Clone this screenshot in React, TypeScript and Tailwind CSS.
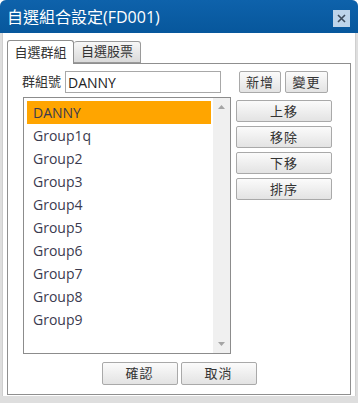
import React from 'react';

const groups = ['DANNY', 'Group1q', 'Group2', 'Group3', 'Group4', 'Group5', 'Group6', 'Group7', 'Group8', 'Group9'];

const font = { fontFamily: '"Open Sans", "Noto Sans CJK TC", sans-serif' };

const Btn: React.FC<{ label: string; className?: string }> = ({ label, className }) => (
  <button
    className={`h-[22px] flex items-center justify-center rounded-[2px] border border-[#a9a9a9] bg-gradient-to-b from-[#fbfbfb] to-[#e3e3e3] text-[13px] text-[#333] leading-none tracking-[1px] ${className ?? ''}`}
  >
    {label}
  </button>
);

const App: React.FC = () => {
  return (
    <div style={font} className="w-[358px] h-[403px] flex flex-col bg-[#dedede] rounded-t-[6px] overflow-hidden">
      {/* Title bar */}
      <div className="h-[33px] shrink-0 flex items-center justify-between pl-[7px] pr-[8px] bg-gradient-to-b from-[#0e62ab] to-[#07579c]">
        <span className="text-white text-[16px] leading-none">自選組合設定(FD001)</span>
        <button className="w-[17px] h-[17px] mt-[3px] flex items-center justify-center bg-[#bdd4ea]">
          <svg width="9" height="9" viewBox="0 0 9 9">
            <path d="M1 1L8 8M8 1L1 8" stroke="#3c4b5c" strokeWidth="1.6" />
          </svg>
        </button>
      </div>

      {/* Body */}
      <div className="flex-1 mx-[2px] mb-[7px] bg-white border-x border-[#cfcfcf] pl-[4px] pr-[4px] pt-[7px] pb-[1px] flex flex-col">
        {/* Tabs */}
        <div className="flex items-end h-[23px] relative z-10">
          <div className="h-[24px] -mb-px w-[67px] flex items-center justify-center rounded-t-[3px] border border-b-0 border-[#8f8f8f] bg-white text-[13px] text-[#333]">
            自選群組
          </div>
          <div className="h-[22px] w-[67px] flex items-center justify-center rounded-t-[3px] border border-l-0 border-[#9a9a9a] bg-gradient-to-b from-[#f7f7f7] to-[#dadada] text-[13px] text-[#333]">
            自選股票
          </div>
        </div>

        {/* Panel */}
        <div className="flex-1 border border-[#8f8f8f] flex flex-col pt-[7px]">
          <div className="flex items-center h-[22px] pl-[14px]">
            <span className="text-[13px] text-[#333] w-[43px]">群組號</span>
            <div className="w-[156px] h-[22px] border border-[#a8a8a8] flex items-center px-[2px] text-[14px] text-[#222]">
              DANNY
            </div>
            <Btn label="新增" className="ml-[18px] w-[42px]" />
            <Btn label="變更" className="ml-[4px] w-[43px]" />
          </div>

          <div className="flex mt-[4px] pl-[15px]">
            <div className="w-[208px] h-[257px] border border-[#8c8c8c] flex">
              <div className="flex-1 pt-[3px] pl-[3px] pr-[2px]">
                {groups.map((g, i) => (
                  <div
                    key={g}
                    className={`h-[23px] flex items-center px-[6px] text-[14px] text-[#3b3b4f] ${i === 0 ? 'bg-[#ffa500]' : ''}`}
                  >
                    {g}
                  </div>
                ))}
              </div>
              <div className="w-[17px] bg-[#f0f0f0] flex flex-col items-center justify-between py-[7px]">
                <svg width="7" height="4" viewBox="0 0 7 4">
                  <path d="M0 4L3.5 0L7 4Z" fill="#a5a5a5" />
                </svg>
                <svg width="7" height="4" viewBox="0 0 7 4">
                  <path d="M0 0L3.5 4L7 0Z" fill="#a5a5a5" />
                </svg>
              </div>
            </div>
            <div className="flex flex-col gap-[4px] ml-[5px] mt-[3px]">
              <Btn label="上移" className="w-[96px]" />
              <Btn label="移除" className="w-[96px]" />
              <Btn label="下移" className="w-[96px]" />
              <Btn label="排序" className="w-[96px]" />
            </div>
          </div>

          <div className="flex justify-center gap-[3px] mt-[8px]">
            <Btn label="確認" className="w-[76px] h-[23px]" />
            <Btn label="取消" className="w-[76px] h-[23px]" />
          </div>
        </div>
      </div>
    </div>
  );
};

export default App;
